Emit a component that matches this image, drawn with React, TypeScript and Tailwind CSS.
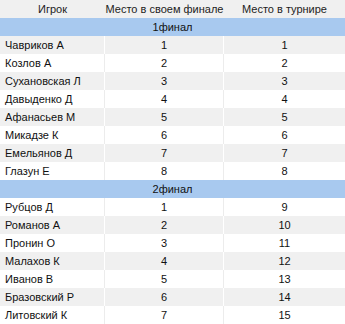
const groups = [
  {
    title: "1финал",
    rows: [
      ["Чавриков А", 1, 1],
      ["Козлов А", 2, 2],
      ["Сухановская Л", 3, 3],
      ["Давыденко Д", 4, 4],
      ["Афанасьев М", 5, 5],
      ["Микадзе К", 6, 6],
      ["Емельянов Д", 7, 7],
      ["Глазун Е", 8, 8],
    ],
  },
  {
    title: "2финал",
    rows: [
      ["Рубцов Д", 1, 9],
      ["Романов А", 2, 10],
      ["Пронин О", 3, 11],
      ["Малахов К", 4, 12],
      ["Иванов В", 5, 13],
      ["Бразовский Р", 6, 14],
      ["Литовский К", 7, 15],
    ],
  },
]

export default function App() {
  // stripes run through the whole list, group rows included
  let idx = 0
  return (
    <div className="w-[345px] h-[324px] bg-white text-[11px] text-[#111] font-['Liberation_Sans',sans-serif] whitespace-nowrap">
      <div className="grid grid-cols-[105px_119px_1fr] h-[18px] leading-[18px] bg-[#f0f0f0] text-center text-[#222]">
        <div>Игрок</div>
        <div>Место в своем финале</div>
        <div>Место в турнире</div>
      </div>
      {groups.map((g) => {
        idx++
        return (
          <div key={g.title}>
            <div className="h-[18px] leading-[18px] bg-[#a8c9ef] text-center">{g.title}</div>
            {g.rows.map((r) => {
              idx++
              const grey = idx % 2 === 0
              return (
                <div
                  key={r[0]}
                  className={
                    grey
                      ? "grid grid-cols-[105px_119px_1fr] h-[18px] leading-[18px] bg-[#f0f0f0]"
                      : "grid grid-cols-[105px_119px_1fr] h-[18px] leading-[18px] bg-white"
                  }
                >
                  <div className={grey ? "pl-[5px] border-r border-white" : "pl-[5px] border-r border-[#ececec]"}>{r[0]}</div>
                  <div className={grey ? "text-center border-r border-white" : "text-center border-r border-[#ececec]"}>{r[1]}</div>
                  <div className="text-center">{r[2]}</div>
                </div>
              )
            })}
          </div>
        )
      })}
    </div>
  )
}
